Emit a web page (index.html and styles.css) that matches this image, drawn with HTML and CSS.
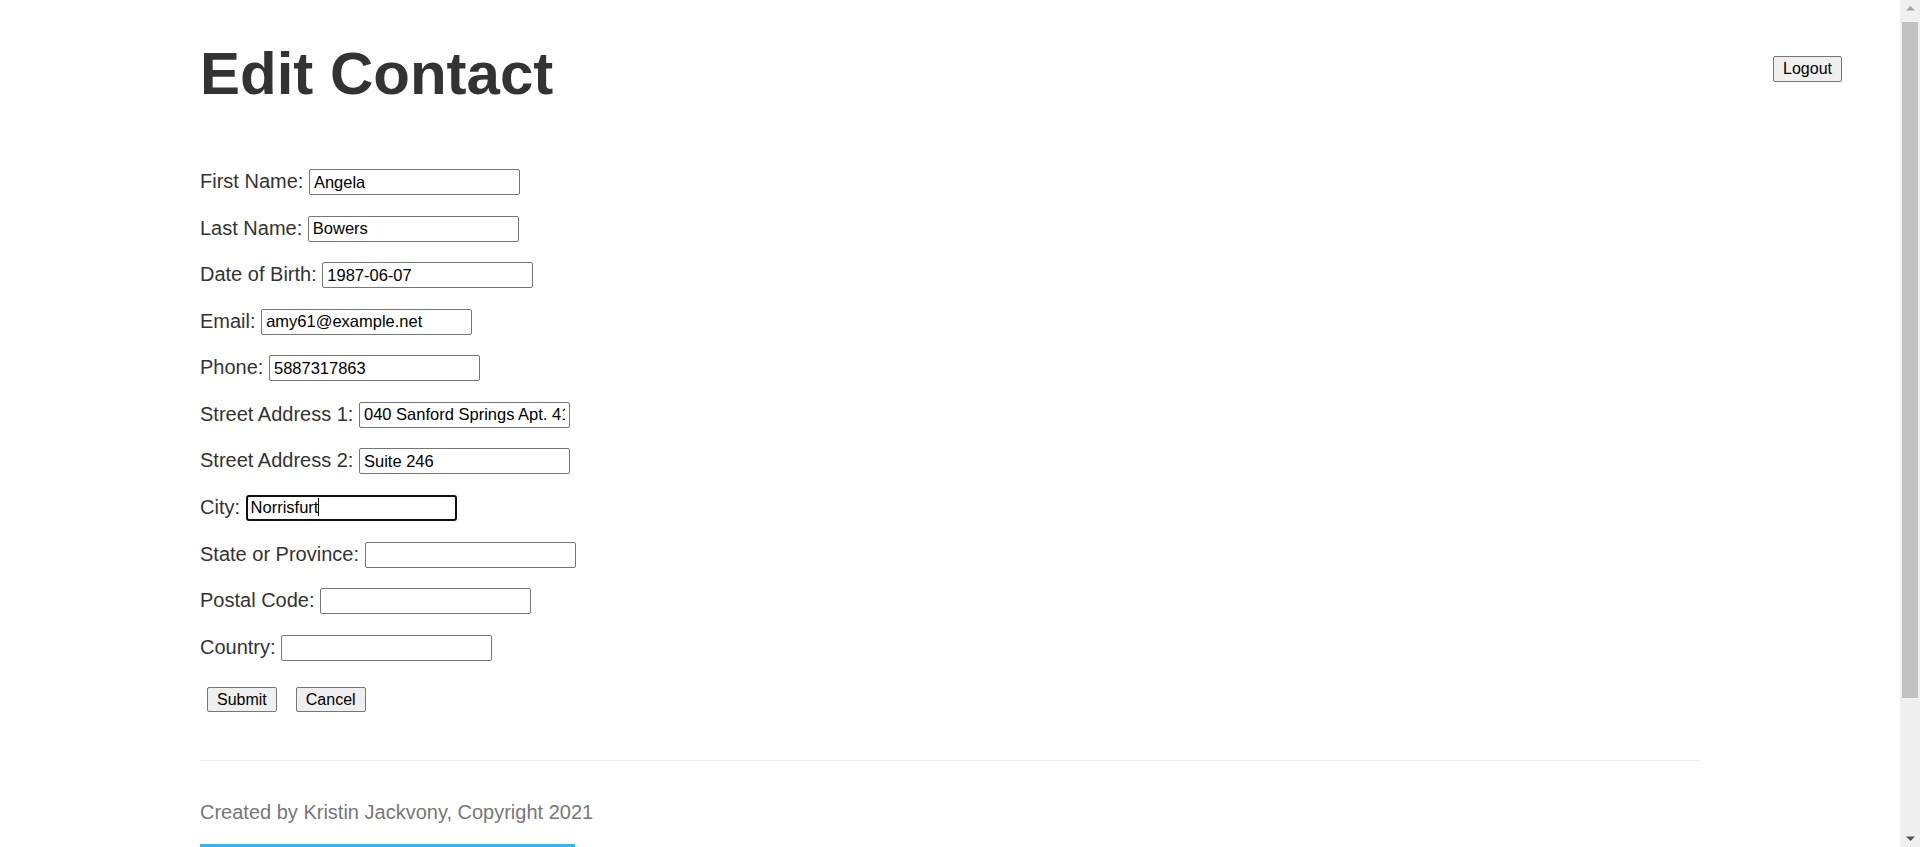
FILE: index.html
```html
<!DOCTYPE html>
<html lang="en">
<head>
<meta charset="utf-8">
<title>Edit Contact</title>
<link rel="stylesheet" href="styles.css">
</head>
<body>
<header class="topbar">
  <h1 class="title">Edit Contact</h1>
  <button class="btn btn-logout" type="button">Logout</button>
</header>
<main class="container">
  <form class="contact-form">
    <div class="field"><label for="firstName">First Name:</label> <input class="text-input" id="firstName" type="text" value="Angela"></div>
    <div class="field"><label for="lastName">Last Name:</label> <input class="text-input" id="lastName" type="text" value="Bowers"></div>
    <div class="field"><label for="birthdate">Date of Birth:</label> <input class="text-input" id="birthdate" type="text" value="1987-06-07"></div>
    <div class="field"><label for="email">Email:</label> <input class="text-input" id="email" type="text" value="amy61@example.net"></div>
    <div class="field"><label for="phone">Phone:</label> <input class="text-input" id="phone" type="text" value="5887317863"></div>
    <div class="field"><label for="street1">Street Address 1:</label> <input class="text-input" id="street1" type="text" value="040 Sanford Springs Apt. 417"></div>
    <div class="field"><label for="street2">Street Address 2:</label> <input class="text-input" id="street2" type="text" value="Suite 246"></div>
    <div class="field"><label for="city">City:</label> <span class="caret-wrap"><input class="text-input is-focused" id="city" type="text" value="Norrisfurt"><span class="caret"></span></span></div>
    <div class="field"><label for="stateProvince">State or Province:</label> <input class="text-input" id="stateProvince" type="text" value=""></div>
    <div class="field"><label for="postalCode">Postal Code:</label> <input class="text-input" id="postalCode" type="text" value=""></div>
    <div class="field"><label for="country">Country:</label> <input class="text-input" id="country" type="text" value=""></div>
    <div class="actions">
      <button class="btn" type="button">Submit</button>
      <button class="btn" type="button">Cancel</button>
    </div>
  </form>
  <footer class="footer">
    <hr class="rule">
    <p class="credit">Created by Kristin Jackvony, Copyright 2021</p>
    <div class="accent"></div>
  </footer>
</main>
<div class="scrollbar" aria-hidden="true">
  <div class="sb-arrow"><svg width="9" height="5" viewBox="0 0 9 5"><polygon points="0,4.5 4.5,0 9,4.5" fill="#a3a3a3"/></svg></div>
  <div class="sb-thumb"></div>
  <div class="sb-spacer"></div>
  <div class="sb-arrow"><svg width="9" height="5" viewBox="0 0 9 5"><polygon points="0,0.5 9,0.5 4.5,5" fill="#505050"/></svg></div>
</div>
</body>
</html>
```
FILE: styles.css
```css
html {
  background: #ffffff;
}

body {
  margin: 0;
  font-family: "Liberation Sans", Arial, sans-serif;
  color: #333333;
  background: #ffffff;
}

.topbar {
  display: flex;
  justify-content: space-between;
  align-items: flex-start;
  padding: 39px 78px 0 200px;
}

.title {
  margin: 0;
  font-size: 60px;
  font-weight: bold;
  line-height: normal;
  color: #333333;
}

.btn {
  font-family: "Liberation Sans", Arial, sans-serif;
  font-size: 16px;
  color: #000000;
  background: #efefef;
  border: 1px solid #767676;
  border-radius: 2px;
  padding: 0 9px;
  height: 25px;
  line-height: normal;
  cursor: default;
}

.btn-logout {
  margin-top: 17px;
  height: 26px;
}

.container {
  margin-left: 200px;
  width: 1500px;
}

.contact-form {
  margin-top: 61px;
  display: flex;
  flex-direction: column;
  gap: 20.57px;
}

.field {
  font-size: 20px;
  line-height: normal;
  color: #333333;
}

.text-input {
  -webkit-appearance: none;
  appearance: none;
  box-sizing: border-box;
  width: 211px;
  height: 26px;
  margin: 0;
  padding: 0 4px;
  border: 1px solid #767676;
  border-radius: 2px;
  background: #ffffff;
  color: #000000;
  font-family: "Liberation Sans", Arial, sans-serif;
  font-size: 16.5px;
  outline: none;
}

.text-input.is-focused {
  border: 2px solid #101010;
  border-radius: 3px;
  padding: 0 3px;
}

.caret-wrap {
  position: relative;
  display: inline-block;
}

.caret {
  position: absolute;
  left: 72px;
  top: 3px;
  width: 1px;
  height: 18px;
  background: #000000;
}

.actions {
  display: flex;
  gap: 19px;
  margin-top: 6px;
  padding-left: 7px;
}

.footer {
  margin-top: 47.7px;
}

.rule {
  margin: 0;
  border: 0;
  border-top: 1px solid #eeeeee;
  height: 0;
}

.credit {
  margin: 40px 0 0;
  font-size: 20px;
  line-height: normal;
  color: #777777;
}

.accent {
  margin-top: 20.4px;
  width: 375px;
  height: 171px;
  border-top: 4px solid #35b4f1;
}

.scrollbar {
  position: fixed;
  top: 0;
  right: 0;
  width: 20px;
  height: 100vh;
  background: #f0f0f0;
  display: flex;
  flex-direction: column;
  align-items: center;
}

.sb-arrow {
  height: 17px;
  width: 100%;
  display: flex;
  align-items: center;
  justify-content: center;
}

.sb-arrow svg {
  display: block;
}

.sb-thumb {
  margin-top: 4.6px;
  width: 16px;
  height: 676px;
  background: #c1c1c1;
}

.sb-spacer {
  flex: 1;
}
```
